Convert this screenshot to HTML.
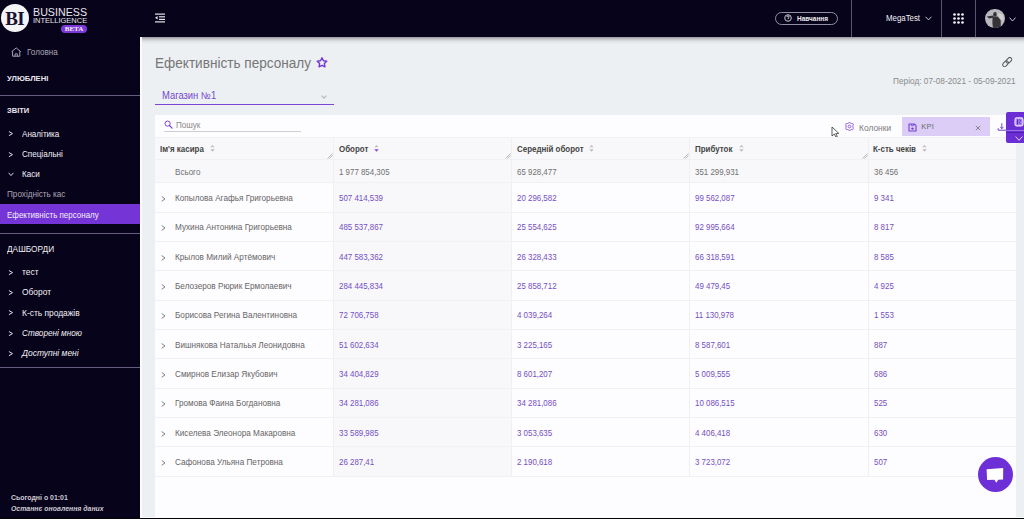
<!DOCTYPE html>
<html><head><meta charset="utf-8"><style>
*{margin:0;padding:0;box-sizing:border-box}
html,body{width:1024px;height:519px;overflow:hidden;background:#ecf0f3;font-family:"Liberation Sans",sans-serif}
.a{position:absolute;white-space:nowrap}
.t{position:absolute;white-space:nowrap;line-height:0;transform-origin:0 0}
.sep{position:absolute;left:0;width:140.3px;height:1px;background:#675c7e}
.chev{position:absolute;left:8.5px;width:3.6px;height:3.6px;border-right:1px solid #d0ccd8;border-top:1px solid #d0ccd8;transform:rotate(45deg)}
.hl{position:absolute;height:1px;background:#f1f1f4}
.vl{position:absolute;width:1px;background:#f0f0f3}
.rchev{position:absolute;width:3.8px;height:3.8px;border-right:1px solid #666;border-top:1px solid #666;transform:rotate(45deg)}
</style></head><body>
<div class="a" style="left:0;top:0;width:140.3px;height:519px;background:#07031a"></div>
<div class="a" style="left:0;top:0;width:1024px;height:36.7px;background:#07031a"></div>
<div class="a" style="left:140px;top:36.7px;width:884px;height:7px;background:linear-gradient(#98989c 0,#c4c5c8 30%,#e0e3e6 62%,#ecf0f3 100%)"></div>
<div class="a" style="left:140.3px;top:36.7px;width:1.8px;height:482px;background:#fbfbfc"></div>
<div class="a" style="left:1px;top:4px;width:28px;height:28px;border-radius:50%;background:#f4f3f6"></div>
<div class="a" style="left:5.2px;top:7.6px;font-family:'Liberation Serif',serif;font-weight:bold;font-size:19px;line-height:21px;color:#1a1030;letter-spacing:-0.5px">BI</div>
<div class="t" style="left:33.00px;top:12.39px;font-size:10.7px;color:#e8e6ee;">BUSINESS</div>
<div class="t" style="left:33.00px;top:20.90px;font-size:7.5px;color:#e8e6ee;">INTELLIGENCE</div>
<div class="a" style="left:61px;top:25px;width:26px;height:8px;border-radius:4px;background:#7b38d8"></div>
<div class="a" style="left:61px;top:25px;width:26px;height:8px;font-family:'Liberation Serif',serif;font-weight:bold;font-size:7px;line-height:8px;color:#f3eefc;text-align:center">BETA</div>
<svg class="a" style="left:154px;top:12px" width="13" height="12" viewBox="0 0 13 12"><rect x="1" y="1.5" width="10" height="1.2" fill="#e6e4ea"/><rect x="5" y="4.2" width="6" height="1.2" fill="#e6e4ea"/><rect x="5" y="6.8" width="6" height="1.2" fill="#e6e4ea"/><rect x="1" y="9.3" width="10" height="1.2" fill="#e6e4ea"/><path d="M3.6 4 L1 5.8 L3.6 7.6 Z" fill="#e6e4ea"/></svg>
<div class="a" style="left:775px;top:12px;width:63px;height:13px;border:1px solid #958ca6;border-radius:7px"></div>
<svg class="a" style="left:784.3px;top:14px" width="8" height="8" viewBox="0 0 8 8"><circle cx="4" cy="4" r="3.3" fill="none" stroke="#dcd9e2" stroke-width="0.9"/><path d="M2.8 3.1 Q2.9 1.9 4 1.9 Q5.2 1.9 5.2 3 Q5.2 3.7 4.2 4.1 L4.1 4.9" fill="none" stroke="#e8e5ee" stroke-width="0.9"/><circle cx="4.05" cy="5.9" r="0.45" fill="#dcd9e2"/></svg>
<div class="t" style="left:796.90px;top:18.58px;font-size:6.7px;color:#eeecf2;font-weight:bold;transform:scaleX(0.97);">Навчання</div>
<div class="a" style="left:850.5px;top:0;width:1px;height:36.7px;background:#5d5670"></div>
<div class="a" style="left:941.3px;top:0;width:1px;height:36.7px;background:#5d5670"></div>
<div class="a" style="left:975px;top:0;width:1px;height:36.7px;background:#5d5670"></div>
<div class="t" style="left:885.70px;top:18.02px;font-size:8.9px;color:#f2f0f6;transform:scaleX(0.885);">MegaTest</div>
<svg class="a" style="left:925px;top:16px" width="7" height="5" viewBox="0 0 7 5"><path d="M0.6 0.8 L3.5 3.9 L6.4 0.8" fill="none" stroke="#dcd8e4" stroke-width="0.9"/></svg>
<svg class="a" style="left:953px;top:13px" width="11" height="11" viewBox="0 0 11 11"><circle cx="1.5" cy="1.5" r="1.35" fill="#f2f0f5"/><circle cx="1.5" cy="5.5" r="1.35" fill="#f2f0f5"/><circle cx="1.5" cy="9.5" r="1.35" fill="#f2f0f5"/><circle cx="5.5" cy="1.5" r="1.35" fill="#f2f0f5"/><circle cx="5.5" cy="5.5" r="1.35" fill="#f2f0f5"/><circle cx="5.5" cy="9.5" r="1.35" fill="#f2f0f5"/><circle cx="9.5" cy="1.5" r="1.35" fill="#f2f0f5"/><circle cx="9.5" cy="5.5" r="1.35" fill="#f2f0f5"/><circle cx="9.5" cy="9.5" r="1.35" fill="#f2f0f5"/></svg>
<div class="a" style="left:985px;top:8.5px;width:19.8px;height:19.8px;border-radius:50%;overflow:hidden;background:#b9b8bd"><svg style="position:absolute;left:0;top:0" width="20" height="20" viewBox="0 0 20 20"><path d="M13 4 L18 6 L19 12 L15 10 Z" fill="#d0cfd2"/><g fill="#353337"><ellipse cx="10" cy="5.4" rx="1.8" ry="2.4"/><path d="M1.8 7.6 L8.2 6.4 L9.2 8.4 L4.2 9.6 Z"/><path d="M7.6 8 L12.6 7.6 L15.6 11 L16 22 L8.4 22 L7.4 14 Z"/></g><path d="M11.8 5.6 L14.4 6.6" stroke="#d4c6b8" stroke-width="0.9"/></svg></div>
<svg class="a" style="left:1009px;top:16.8px" width="7" height="5" viewBox="0 0 7 5"><path d="M0.5 0.6 L3.5 4 L6.5 0.6" fill="none" stroke="#dcd8e4" stroke-width="0.9"/></svg>
<svg class="a" style="left:11px;top:46.5px" width="11" height="10" viewBox="0 0 11 10"><path d="M5.2 0.9 L9.6 4.6 L8.8 4.6 L8.8 9.2 L1.6 9.2 L1.6 4.6 L0.8 4.6 Z" fill="none" stroke="#b3aec0" stroke-width="0.95" stroke-linejoin="round"/><path d="M4.1 9.2 V6.8 H6.3 V9.2" fill="none" stroke="#b3aec0" stroke-width="0.85"/></svg>
<div class="t" style="left:26.70px;top:51.55px;font-size:8.8px;color:#aaa6b4;transform:scaleX(0.92);">Головна</div>
<div class="t" style="left:7.30px;top:79.49px;font-size:8.1px;color:#ebe8f0;font-weight:bold;transform:scaleX(0.95);">УЛЮБЛЕНІ</div>
<div class="sep" style="top:95px"></div>
<div class="t" style="left:7.30px;top:110.89px;font-size:8.1px;color:#ebe8f0;font-weight:bold;transform:scaleX(0.93);">ЗВІТИ</div>
<div class="t" style="left:21.60px;top:133.62px;font-size:8.6px;color:#f2f0f5;transform:scaleX(0.942);">Аналітика</div>
<svg class="a" style="left:8.4px;top:131.2px" width="6" height="6" viewBox="0 0 6 6"><path d="M0.9 0.5 L4.5 2.6 L0.9 4.7" fill="none" stroke="#e4e1ea" stroke-width="1"/></svg>
<div class="t" style="left:21.60px;top:154.42px;font-size:8.6px;color:#f2f0f5;transform:scaleX(0.942);">Спеціальні</div>
<svg class="a" style="left:8.4px;top:152.0px" width="6" height="6" viewBox="0 0 6 6"><path d="M0.9 0.5 L4.5 2.6 L0.9 4.7" fill="none" stroke="#e4e1ea" stroke-width="1"/></svg>
<div class="t" style="left:21.60px;top:174.12px;font-size:8.6px;color:#f2f0f5;transform:scaleX(0.942);">Каси</div>
<svg class="a" style="left:8.4px;top:171.89999999999998px" width="6" height="5" viewBox="0 0 6 5"><path d="M0.6 0.8 L3 3.6 L5.4 0.8" fill="none" stroke="#e4e1ea" stroke-width="0.95"/></svg>
<div class="t" style="left:7.30px;top:194.32px;font-size:8.6px;color:#aaa6b4;transform:scaleX(0.948);">Прохідність кас</div>
<div class="a" style="left:0;top:203.8px;width:140.3px;height:20.2px;background:#7434d6"></div>
<div class="t" style="left:7.20px;top:215.35px;font-size:8.5px;color:#f4f0fb;transform:scaleX(0.94);">Ефективність персоналу</div>
<div class="sep" style="top:233px"></div>
<div class="t" style="left:7.00px;top:249.42px;font-size:8.6px;color:#f2f0f5;transform:scaleX(0.965);">ДАШБОРДИ</div>
<div class="t" style="left:21.60px;top:272.05px;font-size:8.8px;color:#f2f0f5;transform:scaleX(0.955);">тест</div>
<svg class="a" style="left:8.4px;top:269.8px" width="6" height="6" viewBox="0 0 6 6"><path d="M0.9 0.5 L4.5 2.6 L0.9 4.7" fill="none" stroke="#e4e1ea" stroke-width="1"/></svg>
<div class="t" style="left:21.60px;top:292.05px;font-size:8.8px;color:#f2f0f5;transform:scaleX(0.955);">Оборот</div>
<svg class="a" style="left:8.4px;top:289.8px" width="6" height="6" viewBox="0 0 6 6"><path d="M0.9 0.5 L4.5 2.6 L0.9 4.7" fill="none" stroke="#e4e1ea" stroke-width="1"/></svg>
<div class="t" style="left:21.60px;top:312.65px;font-size:8.8px;color:#f2f0f5;transform:scaleX(0.955);">К-сть продажів</div>
<svg class="a" style="left:8.4px;top:310.4px" width="6" height="6" viewBox="0 0 6 6"><path d="M0.9 0.5 L4.5 2.6 L0.9 4.7" fill="none" stroke="#e4e1ea" stroke-width="1"/></svg>
<div class="t" style="left:21.60px;top:333.02px;font-size:8.6px;color:#f2f0f5;font-style:italic;transform:scaleX(0.953);">Створені мною</div>
<svg class="a" style="left:8.4px;top:330.7px" width="6" height="6" viewBox="0 0 6 6"><path d="M0.9 0.5 L4.5 2.6 L0.9 4.7" fill="none" stroke="#e4e1ea" stroke-width="1"/></svg>
<div class="t" style="left:21.60px;top:353.02px;font-size:8.9px;color:#f2f0f5;font-style:italic;transform:scaleX(0.955);">Доступні мені</div>
<svg class="a" style="left:8.4px;top:350.8px" width="6" height="6" viewBox="0 0 6 6"><path d="M0.9 0.5 L4.5 2.6 L0.9 4.7" fill="none" stroke="#e4e1ea" stroke-width="1"/></svg>
<div class="sep" style="top:367px"></div>
<div class="t" style="left:11.00px;top:498.39px;font-size:6.95px;color:#cfcbd6;font-weight:bold;">Сьогодні о 01:01</div>
<div class="t" style="left:11.00px;top:509.01px;font-size:6.9px;color:#cfcbd6;font-weight:bold;font-style:italic;">Останнє оновлення даних</div>
<div class="t" style="left:155.40px;top:63.01px;font-size:14.1px;color:#767676;transform:scaleX(0.964);">Ефективність персоналу</div>
<svg class="a" style="left:315.9px;top:56.9px" width="12" height="11" viewBox="0 0 12 11"><path d="M6.00 0.80 L7.47 3.78 L10.76 4.25 L8.38 6.57 L8.94 9.85 L6.00 8.30 L3.06 9.85 L3.62 6.57 L1.24 4.25 L4.53 3.78 Z" fill="none" stroke="#6f34d6" stroke-width="1.35" stroke-linejoin="round"/></svg>
<div class="t" style="left:161.60px;top:95.94px;font-size:10px;color:#7548d0;transform:scaleX(0.94);">Магазин №1</div>
<div class="a" style="left:322px;top:93.5px;width:4px;height:4px;border-right:1px solid #b5b5b5;border-bottom:1px solid #b5b5b5;transform:rotate(45deg)"></div>
<div class="a" style="left:155px;top:103.7px;width:178.7px;height:1.7px;background:#7d45d6"></div>
<svg class="a" style="left:1001px;top:57px" width="12" height="11" viewBox="0 0 12 11"><g fill="none" stroke="#5c5c5c" stroke-width="1.05"><rect x="1.3" y="4.8" width="6.4" height="3.9" rx="1.95" transform="rotate(-45 4.5 6.75)"/><rect x="4.7" y="1.35" width="6.4" height="3.9" rx="1.95" transform="rotate(-45 7.9 3.3)"/></g></svg>
<div class="t" style="left:892.90px;top:80.55px;font-size:8.5px;color:#8a8a8a;transform:scaleX(0.972);">Період: 07-08-2021 - 05-09-2021</div>
<div class="a" style="left:154.7px;top:114.7px;width:861.8px;height:402.3px;background:#fdfcfe"></div>
<svg class="a" style="left:164px;top:119.5px" width="9" height="9" viewBox="0 0 9 9"><circle cx="3.6" cy="3.6" r="2.6" fill="none" stroke="#7d45d6" stroke-width="1.0"/><path d="M5.5 5.5 L8.1 8.1" stroke="#7d45d6" stroke-width="1.2" stroke-linecap="round"/></svg>
<div class="t" style="left:175.50px;top:125.05px;font-size:8.5px;color:#888;transform:scaleX(0.95);">Пошук</div>
<div class="a" style="left:164px;top:130.8px;width:136.5px;height:1px;background:#cfcfd2"></div>
<svg class="a" style="left:830.5px;top:125.5px" width="9" height="12" viewBox="0 0 9 12"><path d="M1 1 L1 10 L3.3 8 L5 11.2 L6.3 10.5 L4.8 7.5 L7.8 7.4 Z" fill="#fff" stroke="#333" stroke-width="0.8" stroke-linejoin="round"/></svg>
<svg class="a" style="left:844.6px;top:122.2px" width="9" height="9" viewBox="0 0 9 9"><path d="M4.5 0.6 C5.3 0.6 5.6 1.4 6.3 1.5 C7.1 1.6 7.6 1 8.1 1.9 C8.5 2.6 7.9 3.1 7.9 4.5 C7.9 5.9 8.5 6.4 8.1 7.1 C7.6 8 7.1 7.4 6.3 7.5 C5.6 7.6 5.3 8.4 4.5 8.4 C3.7 8.4 3.4 7.6 2.7 7.5 C1.9 7.4 1.4 8 0.9 7.1 C0.5 6.4 1.1 5.9 1.1 4.5 C1.1 3.1 0.5 2.6 0.9 1.9 C1.4 1 1.9 1.6 2.7 1.5 C3.4 1.4 3.7 0.6 4.5 0.6 Z" fill="none" stroke="#8a55da" stroke-width="1"/><circle cx="4.5" cy="4.5" r="1.4" fill="none" stroke="#8a55da" stroke-width="0.9"/></svg>
<div class="t" style="left:858.70px;top:127.55px;font-size:8.5px;color:#7c7c7c;transform:scaleX(0.99);">Колонки</div>
<div class="a" style="left:901.5px;top:117.3px;width:88.5px;height:18.5px;background:#dccdf6"></div>
<svg class="a" style="left:907.6px;top:122.8px" width="9" height="9" viewBox="0 0 9 9"><path d="M1 1 H6.3 L8 2.7 V8 H1 Z" fill="none" stroke="#7440d4" stroke-width="1.1" stroke-linejoin="round"/><path d="M3.2 1 V2.6 H5.6 V1" fill="none" stroke="#7440d4" stroke-width="0.8"/><circle cx="4.5" cy="5.6" r="1.2" fill="#7440d4"/></svg>
<div class="t" style="left:921.30px;top:127.17px;font-size:7.6px;color:#6a6a6a;letter-spacing:0.2px">KPI</div>
<svg class="a" style="left:974.5px;top:125px" width="6" height="6" viewBox="0 0 6 6"><path d="M0.8 0.8 L5.2 5.2 M5.2 0.8 L0.8 5.2" stroke="#6a6a6a" stroke-width="0.75"/></svg>
<svg class="a" style="left:997px;top:122px" width="10" height="10" viewBox="0 0 10 10"><path d="M4.8 1.2 V6.4" stroke="#6b3ad0" stroke-width="0.9"/><path d="M3.3 4.9 L4.8 6.8 L6.3 4.9" fill="none" stroke="#6b3ad0" stroke-width="0.9"/><path d="M1.2 6.4 V8.2 H10" fill="none" stroke="#6b3ad0" stroke-width="1"/></svg>
<div class="a" style="left:154.7px;top:136.6px;width:861.8px;height:45.80000000000001px;background:#f8f8fa"></div>
<div class="a" style="left:332.7px;top:182.4px;width:178.3px;height:293.29999999999995px;background:#f8f8fa"></div>
<div class="hl" style="left:154.7px;top:136.6px;width:861.8px"></div>
<div class="hl" style="left:154.7px;top:159.2px;width:861.8px"></div>
<div class="hl" style="left:154.7px;top:182.4px;width:861.8px"></div>
<div class="hl" style="left:154.7px;top:211.73000000000002px;width:861.8px"></div>
<div class="hl" style="left:154.7px;top:241.06px;width:861.8px"></div>
<div class="hl" style="left:154.7px;top:270.39px;width:861.8px"></div>
<div class="hl" style="left:154.7px;top:299.72px;width:861.8px"></div>
<div class="hl" style="left:154.7px;top:329.04999999999995px;width:861.8px"></div>
<div class="hl" style="left:154.7px;top:358.38px;width:861.8px"></div>
<div class="hl" style="left:154.7px;top:387.71000000000004px;width:861.8px"></div>
<div class="hl" style="left:154.7px;top:417.03999999999996px;width:861.8px"></div>
<div class="hl" style="left:154.7px;top:446.37px;width:861.8px"></div>
<div class="hl" style="left:154.7px;top:475.69999999999993px;width:861.8px"></div>
<div class="vl" style="left:332.7px;top:136.6px;height:339.0999999999999px"></div>
<div class="vl" style="left:511.0px;top:136.6px;height:339.0999999999999px"></div>
<div class="vl" style="left:689.3px;top:136.6px;height:339.0999999999999px"></div>
<div class="vl" style="left:867.6px;top:136.6px;height:339.0999999999999px"></div>
<div class="t" style="left:160.00px;top:148.65px;font-size:8.5px;color:#454545;font-weight:bold;transform:scaleX(0.935);">Ім'я касира</div>
<svg class="a" style="left:209.8px;top:144.1px" width="5" height="8.5" viewBox="0 0 5 8.5"><path d="M0.3 3.2 L2.5 0.8 L4.7 3.2 Z" fill="#c4c4c4"/><path d="M0.3 5.2 L2.5 7.7 L4.7 5.2 Z" fill="#bdbdbd"/></svg>
<svg class="a" style="left:326.7px;top:153px" width="6" height="6" viewBox="0 0 6 6"><path d="M0.5 5.5 L5.5 0.5 M2.5 5.5 L5.5 2.5" stroke="#9a9a9a" stroke-width="0.7"/></svg>
<div class="t" style="left:338.50px;top:148.65px;font-size:8.5px;color:#454545;font-weight:bold;transform:scaleX(0.935);">Оборот</div>
<svg class="a" style="left:373.6px;top:144.1px" width="5" height="8.5" viewBox="0 0 5 8.5"><path d="M0.3 3.2 L2.5 0.8 L4.7 3.2 Z" fill="#c4c4c4"/><path d="M0.3 5.2 L2.5 7.7 L4.7 5.2 Z" fill="#7d45d6"/></svg>
<svg class="a" style="left:505.0px;top:153px" width="6" height="6" viewBox="0 0 6 6"><path d="M0.5 5.5 L5.5 0.5 M2.5 5.5 L5.5 2.5" stroke="#9a9a9a" stroke-width="0.7"/></svg>
<div class="t" style="left:516.80px;top:148.65px;font-size:8.5px;color:#454545;font-weight:bold;transform:scaleX(0.935);">Середній оборот</div>
<svg class="a" style="left:588.5px;top:144.1px" width="5" height="8.5" viewBox="0 0 5 8.5"><path d="M0.3 3.2 L2.5 0.8 L4.7 3.2 Z" fill="#c4c4c4"/><path d="M0.3 5.2 L2.5 7.7 L4.7 5.2 Z" fill="#bdbdbd"/></svg>
<svg class="a" style="left:683.3px;top:153px" width="6" height="6" viewBox="0 0 6 6"><path d="M0.5 5.5 L5.5 0.5 M2.5 5.5 L5.5 2.5" stroke="#9a9a9a" stroke-width="0.7"/></svg>
<div class="t" style="left:695.10px;top:148.65px;font-size:8.5px;color:#454545;font-weight:bold;transform:scaleX(0.935);">Прибуток</div>
<svg class="a" style="left:738.6px;top:144.1px" width="5" height="8.5" viewBox="0 0 5 8.5"><path d="M0.3 3.2 L2.5 0.8 L4.7 3.2 Z" fill="#c4c4c4"/><path d="M0.3 5.2 L2.5 7.7 L4.7 5.2 Z" fill="#bdbdbd"/></svg>
<svg class="a" style="left:861.6px;top:153px" width="6" height="6" viewBox="0 0 6 6"><path d="M0.5 5.5 L5.5 0.5 M2.5 5.5 L5.5 2.5" stroke="#9a9a9a" stroke-width="0.7"/></svg>
<div class="t" style="left:873.40px;top:148.65px;font-size:8.5px;color:#454545;font-weight:bold;transform:scaleX(0.935);">К-сть чеків</div>
<svg class="a" style="left:921.8px;top:144.1px" width="5" height="8.5" viewBox="0 0 5 8.5"><path d="M0.3 3.2 L2.5 0.8 L4.7 3.2 Z" fill="#c4c4c4"/><path d="M0.3 5.2 L2.5 7.7 L4.7 5.2 Z" fill="#bdbdbd"/></svg>
<div class="t" style="left:175.00px;top:172.05px;font-size:8.5px;color:#707070;transform:scaleX(0.95);">Всього</div>
<div class="t" style="left:338.70px;top:172.05px;font-size:8.5px;color:#707070;transform:scaleX(0.93);">1 977 854,305</div>
<div class="t" style="left:517.00px;top:172.05px;font-size:8.5px;color:#707070;transform:scaleX(0.93);">65 928,477</div>
<div class="t" style="left:695.30px;top:172.05px;font-size:8.5px;color:#707070;transform:scaleX(0.93);">351 299,931</div>
<div class="t" style="left:873.60px;top:172.05px;font-size:8.5px;color:#707070;transform:scaleX(0.93);">36 456</div>
<svg class="a" style="left:161.2px;top:195.865px" width="5" height="6" viewBox="0 0 5 6"><path d="M0.7 0.5 L4 2.9 L0.7 5.3" fill="none" stroke="#747474" stroke-width="0.9"/></svg>
<div class="t" style="left:175.00px;top:197.92px;font-size:8.5px;color:#666666;transform:scaleX(0.963);">Копылова Агафья Григорьевна</div>
<div class="t" style="left:338.70px;top:197.92px;font-size:8.5px;color:#7450c2;transform:scaleX(0.93);">507 414,539</div>
<div class="t" style="left:517.00px;top:197.92px;font-size:8.5px;color:#7450c2;transform:scaleX(0.93);">20 296,582</div>
<div class="t" style="left:695.30px;top:197.92px;font-size:8.5px;color:#7450c2;transform:scaleX(0.93);">99 562,087</div>
<div class="t" style="left:873.60px;top:197.92px;font-size:8.5px;color:#7450c2;transform:scaleX(0.93);">9 341</div>
<svg class="a" style="left:161.2px;top:225.19500000000002px" width="5" height="6" viewBox="0 0 5 6"><path d="M0.7 0.5 L4 2.9 L0.7 5.3" fill="none" stroke="#747474" stroke-width="0.9"/></svg>
<div class="t" style="left:175.00px;top:227.25px;font-size:8.5px;color:#666666;transform:scaleX(0.963);">Мухина Антонина Григорьевна</div>
<div class="t" style="left:338.70px;top:227.25px;font-size:8.5px;color:#7450c2;transform:scaleX(0.93);">485 537,867</div>
<div class="t" style="left:517.00px;top:227.25px;font-size:8.5px;color:#7450c2;transform:scaleX(0.93);">25 554,625</div>
<div class="t" style="left:695.30px;top:227.25px;font-size:8.5px;color:#7450c2;transform:scaleX(0.93);">92 995,664</div>
<div class="t" style="left:873.60px;top:227.25px;font-size:8.5px;color:#7450c2;transform:scaleX(0.93);">8 817</div>
<svg class="a" style="left:161.2px;top:254.525px" width="5" height="6" viewBox="0 0 5 6"><path d="M0.7 0.5 L4 2.9 L0.7 5.3" fill="none" stroke="#747474" stroke-width="0.9"/></svg>
<div class="t" style="left:175.00px;top:256.58px;font-size:8.5px;color:#666666;transform:scaleX(0.963);">Крылов Милий Артёмович</div>
<div class="t" style="left:338.70px;top:256.58px;font-size:8.5px;color:#7450c2;transform:scaleX(0.93);">447 583,362</div>
<div class="t" style="left:517.00px;top:256.58px;font-size:8.5px;color:#7450c2;transform:scaleX(0.93);">26 328,433</div>
<div class="t" style="left:695.30px;top:256.58px;font-size:8.5px;color:#7450c2;transform:scaleX(0.93);">66 318,591</div>
<div class="t" style="left:873.60px;top:256.58px;font-size:8.5px;color:#7450c2;transform:scaleX(0.93);">8 585</div>
<svg class="a" style="left:161.2px;top:283.855px" width="5" height="6" viewBox="0 0 5 6"><path d="M0.7 0.5 L4 2.9 L0.7 5.3" fill="none" stroke="#747474" stroke-width="0.9"/></svg>
<div class="t" style="left:175.00px;top:285.91px;font-size:8.5px;color:#666666;transform:scaleX(0.963);">Белозеров Рюрик Ермолаевич</div>
<div class="t" style="left:338.70px;top:285.91px;font-size:8.5px;color:#7450c2;transform:scaleX(0.93);">284 445,834</div>
<div class="t" style="left:517.00px;top:285.91px;font-size:8.5px;color:#7450c2;transform:scaleX(0.93);">25 858,712</div>
<div class="t" style="left:695.30px;top:285.91px;font-size:8.5px;color:#7450c2;transform:scaleX(0.93);">49 479,45</div>
<div class="t" style="left:873.60px;top:285.91px;font-size:8.5px;color:#7450c2;transform:scaleX(0.93);">4 925</div>
<svg class="a" style="left:161.2px;top:313.18500000000006px" width="5" height="6" viewBox="0 0 5 6"><path d="M0.7 0.5 L4 2.9 L0.7 5.3" fill="none" stroke="#747474" stroke-width="0.9"/></svg>
<div class="t" style="left:175.00px;top:315.24px;font-size:8.5px;color:#666666;transform:scaleX(0.963);">Борисова Регина Валентиновна</div>
<div class="t" style="left:338.70px;top:315.24px;font-size:8.5px;color:#7450c2;transform:scaleX(0.93);">72 706,758</div>
<div class="t" style="left:517.00px;top:315.24px;font-size:8.5px;color:#7450c2;transform:scaleX(0.93);">4 039,264</div>
<div class="t" style="left:695.30px;top:315.24px;font-size:8.5px;color:#7450c2;transform:scaleX(0.93);">11 130,978</div>
<div class="t" style="left:873.60px;top:315.24px;font-size:8.5px;color:#7450c2;transform:scaleX(0.93);">1 553</div>
<svg class="a" style="left:161.2px;top:342.515px" width="5" height="6" viewBox="0 0 5 6"><path d="M0.7 0.5 L4 2.9 L0.7 5.3" fill="none" stroke="#747474" stroke-width="0.9"/></svg>
<div class="t" style="left:175.00px;top:344.57px;font-size:8.5px;color:#666666;transform:scaleX(0.963);">Вишнякова Натальья Леонидовна</div>
<div class="t" style="left:338.70px;top:344.57px;font-size:8.5px;color:#7450c2;transform:scaleX(0.93);">51 602,634</div>
<div class="t" style="left:517.00px;top:344.57px;font-size:8.5px;color:#7450c2;transform:scaleX(0.93);">3 225,165</div>
<div class="t" style="left:695.30px;top:344.57px;font-size:8.5px;color:#7450c2;transform:scaleX(0.93);">8 587,601</div>
<div class="t" style="left:873.60px;top:344.57px;font-size:8.5px;color:#7450c2;transform:scaleX(0.93);">887</div>
<svg class="a" style="left:161.2px;top:371.845px" width="5" height="6" viewBox="0 0 5 6"><path d="M0.7 0.5 L4 2.9 L0.7 5.3" fill="none" stroke="#747474" stroke-width="0.9"/></svg>
<div class="t" style="left:175.00px;top:373.90px;font-size:8.5px;color:#666666;transform:scaleX(0.963);">Смирнов Елизар Якубович</div>
<div class="t" style="left:338.70px;top:373.90px;font-size:8.5px;color:#7450c2;transform:scaleX(0.93);">34 404,829</div>
<div class="t" style="left:517.00px;top:373.90px;font-size:8.5px;color:#7450c2;transform:scaleX(0.93);">8 601,207</div>
<div class="t" style="left:695.30px;top:373.90px;font-size:8.5px;color:#7450c2;transform:scaleX(0.93);">5 009,555</div>
<div class="t" style="left:873.60px;top:373.90px;font-size:8.5px;color:#7450c2;transform:scaleX(0.93);">686</div>
<svg class="a" style="left:161.2px;top:401.17500000000007px" width="5" height="6" viewBox="0 0 5 6"><path d="M0.7 0.5 L4 2.9 L0.7 5.3" fill="none" stroke="#747474" stroke-width="0.9"/></svg>
<div class="t" style="left:175.00px;top:403.23px;font-size:8.5px;color:#666666;transform:scaleX(0.963);">Громова Фаина Богдановна</div>
<div class="t" style="left:338.70px;top:403.23px;font-size:8.5px;color:#7450c2;transform:scaleX(0.93);">34 281,086</div>
<div class="t" style="left:517.00px;top:403.23px;font-size:8.5px;color:#7450c2;transform:scaleX(0.93);">34 281,086</div>
<div class="t" style="left:695.30px;top:403.23px;font-size:8.5px;color:#7450c2;transform:scaleX(0.93);">10 086,515</div>
<div class="t" style="left:873.60px;top:403.23px;font-size:8.5px;color:#7450c2;transform:scaleX(0.93);">525</div>
<svg class="a" style="left:161.2px;top:430.505px" width="5" height="6" viewBox="0 0 5 6"><path d="M0.7 0.5 L4 2.9 L0.7 5.3" fill="none" stroke="#747474" stroke-width="0.9"/></svg>
<div class="t" style="left:175.00px;top:432.56px;font-size:8.5px;color:#666666;transform:scaleX(0.963);">Киселева Элеонора Макаровна</div>
<div class="t" style="left:338.70px;top:432.56px;font-size:8.5px;color:#7450c2;transform:scaleX(0.93);">33 589,985</div>
<div class="t" style="left:517.00px;top:432.56px;font-size:8.5px;color:#7450c2;transform:scaleX(0.93);">3 053,635</div>
<div class="t" style="left:695.30px;top:432.56px;font-size:8.5px;color:#7450c2;transform:scaleX(0.93);">4 406,418</div>
<div class="t" style="left:873.60px;top:432.56px;font-size:8.5px;color:#7450c2;transform:scaleX(0.93);">630</div>
<svg class="a" style="left:161.2px;top:459.83500000000004px" width="5" height="6" viewBox="0 0 5 6"><path d="M0.7 0.5 L4 2.9 L0.7 5.3" fill="none" stroke="#747474" stroke-width="0.9"/></svg>
<div class="t" style="left:175.00px;top:461.89px;font-size:8.5px;color:#666666;transform:scaleX(0.963);">Сафонова Ульяна Петровна</div>
<div class="t" style="left:338.70px;top:461.89px;font-size:8.5px;color:#7450c2;transform:scaleX(0.93);">26 287,41</div>
<div class="t" style="left:517.00px;top:461.89px;font-size:8.5px;color:#7450c2;transform:scaleX(0.93);">2 190,618</div>
<div class="t" style="left:695.30px;top:461.89px;font-size:8.5px;color:#7450c2;transform:scaleX(0.93);">3 723,072</div>
<div class="t" style="left:873.60px;top:461.89px;font-size:8.5px;color:#7450c2;transform:scaleX(0.93);">507</div>
<div class="a" style="left:1006px;top:112px;width:18px;height:30.7px;background:#6b2ed4;border-radius:2px 0 0 2px"></div>
<div class="a" style="left:1006px;top:130.3px;width:18px;height:1.2px;background:#9a74e2"></div>
<div class="a" style="left:1006px;top:131.5px;width:18px;height:0.8px;background:#5520b4"></div>
<svg class="a" style="left:1013.6px;top:117px" width="10" height="10" viewBox="0 0 10 10"><rect x="1" y="0.9" width="8" height="8" rx="1.8" fill="#a888ee" stroke="#eee6fc" stroke-width="1.1"/><path d="M3.6 2.2 V7.6" stroke="#5a1fc4" stroke-width="1.1"/><path d="M5 2.6 L6.9 3.6 L5.4 5.4 L6.7 7.2" fill="none" stroke="#5a1fc4" stroke-width="0.8"/></svg>
<svg class="a" style="left:1014.6px;top:135.8px" width="8" height="5" viewBox="0 0 8 5"><path d="M0.6 0.6 L4 4.3 L7.4 0.6" fill="none" stroke="#f0eafc" stroke-width="0.9"/></svg>
<div class="a" style="left:977.6px;top:456.7px;width:35.6px;height:35.6px;border-radius:50%;background:#6d2fd6"></div>
<svg class="a" style="left:985px;top:466px" width="20" height="18" viewBox="0 0 20 18"><path d="M1.6 3.2 L18.2 2.1 L18.1 13.6 L13.2 13.7 L11.3 16.7 L9.4 13.8 L2.1 13.9 Z" fill="#fff"/></svg>
<div class="a" style="left:140.3px;top:516.6px;width:884px;height:1px;background:#fbfbfc"></div>
<div class="a" style="left:0;top:517.6px;width:1024px;height:1.4px;background:#040306"></div>
</body></html>
